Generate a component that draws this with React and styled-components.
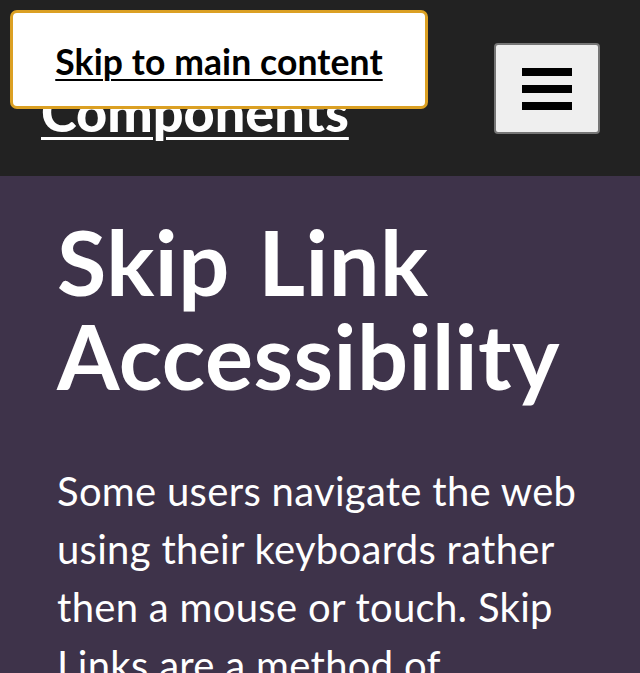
import styled, { createGlobalStyle } from 'styled-components'

const GlobalStyle = createGlobalStyle`
  html, body {
    margin: 0;
    padding: 0;
    background: #3e334a;
    font-family: Lato, "Noto Sans", sans-serif;
    color: #fff;
  }
  * {
    box-sizing: border-box;
  }
`

function MenuIcon() {
  return (
    <svg width="50" height="42" viewBox="0 0 50 42" aria-hidden="true">
      <rect x="0" y="0" width="50" height="8" fill="#000" />
      <rect x="0" y="17" width="50" height="8" fill="#000" />
      <rect x="0" y="34" width="50" height="8" fill="#000" />
    </svg>
  )
}

function App() {
  return (
    <>
      <GlobalStyle />
      <SkipLink href="#main">Skip to main content</SkipLink>
      <Header>
        <SiteTitle href="#">
          Accessible
          <br />
          Components
        </SiteTitle>
        <MenuButton aria-label="Open menu">
          <MenuIcon />
        </MenuButton>
      </Header>
      <Main id="main">
        <Title>Skip Link Accessibility</Title>
        <Intro>
          Some users navigate the web using their keyboards rather then a mouse
          or touch. Skip Links are a method of allowing those users to jump
          straight past the navigation to the main content of a page.
        </Intro>
      </Main>
    </>
  )
}

const SkipLink = styled.a`
  position: absolute;
  top: 10px;
  left: 10px;
  z-index: 10;
  width: 418px;
  height: 99px;
  display: flex;
  align-items: center;
  justify-content: center;
  padding-top: 3px;
  background: #fff;
  border: 3px solid #dba023;
  border-radius: 7px;
  color: #000;
  font-weight: 700;
  font-size: 35.5px;
  letter-spacing: 0.1px;
  text-decoration: underline;
  text-decoration-thickness: 2px;
  text-underline-offset: 4px;
`

const Header = styled.header`
  height: 176px;
  background: #222;
  display: flex;
  align-items: center;
  justify-content: space-between;
  padding: 0 40px 0 41px;
`

const SiteTitle = styled.a`
  display: block;
  margin-top: -12px;
  color: #fff;
  font-weight: 900;
  font-size: 54px;
  line-height: 60px;
  text-decoration: underline;
  text-decoration-thickness: 3px;
  text-underline-offset: 5px;
`

const MenuButton = styled.button`
  width: 106px;
  height: 91px;
  margin-top: 1px;
  display: flex;
  align-items: center;
  justify-content: center;
  background: #efefef;
  border: 2px solid #767676;
  border-radius: 4px;
  padding: 0;
`

const Main = styled.main`
  padding: 38px 57px 40px;
`

const Title = styled.h1`
  margin: 0 0 60px;
  font-weight: 700;
  font-size: 90px;
  line-height: 94px;
  letter-spacing: 0.5px;
  word-spacing: 6px;
`

const Intro = styled.p`
  margin: 0;
  font-weight: 400;
  font-size: 40px;
  line-height: 58px;
  letter-spacing: 0.3px;
`

export default App
